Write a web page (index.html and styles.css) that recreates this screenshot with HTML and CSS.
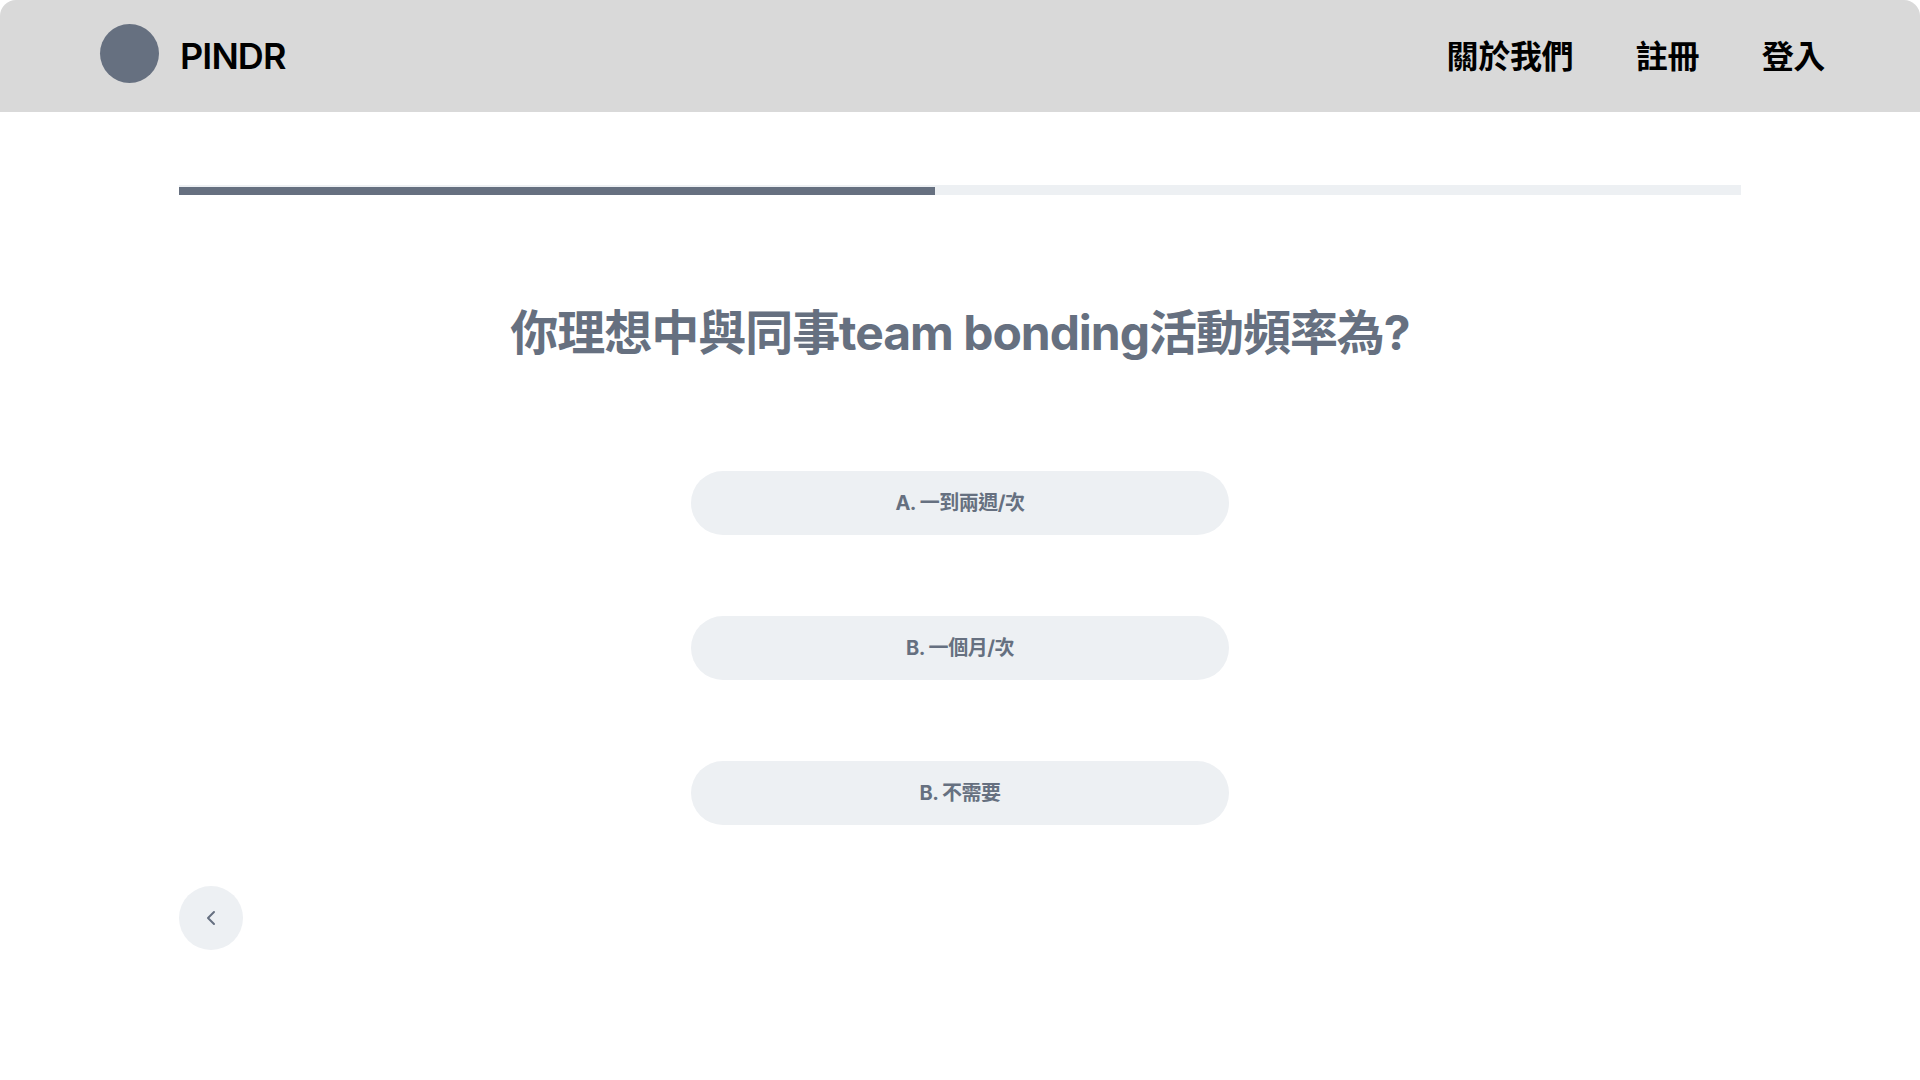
FILE: index.html
```html
<!DOCTYPE html>
<html lang="zh-Hant">
<head>
<meta charset="utf-8">
<title>PINDR</title>
<link rel="stylesheet" href="styles.css">
</head>
<body>
<header class="topbar">
  <div class="brand">
    <span class="brand-mark"></span>
    <span class="brand-name">PINDR</span>
  </div>
  <nav class="nav">
    <a class="nav-link">關於我們</a>
    <a class="nav-link">註冊</a>
    <a class="nav-link">登入</a>
  </nav>
</header>
<main class="quiz">
  <div class="progress"><div class="progress-fill"></div></div>
  <h1 class="question">你理想中與同事team bonding活動頻率為?</h1>
  <div class="options">
    <button class="option">A. 一到兩週/次</button>
    <button class="option">B. 一個月/次</button>
    <button class="option">B. 不需要</button>
  </div>
  <button class="back" aria-label="返回">
    <svg class="back-icon" viewBox="0 0 24 24" fill="none" stroke="currentColor" stroke-width="2" stroke-linecap="round" stroke-linejoin="round"><path d="M15 18l-6-6 6-6"/></svg>
  </button>
</main>
</body>
</html>
```
FILE: styles.css
```css
* { box-sizing: border-box; }
html, body { margin: 0; height: 100%; }
body {
  background: #fff;
  font-family: Inter, "Noto Sans CJK TC", sans-serif;
  letter-spacing: -0.02em;
  color: #667080;
}
.topbar {
  height: 112px;
  background: #d9d9d9;
  border-radius: 16px 16px 0 0;
  display: flex;
  align-items: center;
  justify-content: space-between;
  padding: 0 95px 0 100px;
}
.brand { display: flex; align-items: center; gap: 21px; }
.brand-mark { width: 59px; height: 59px; border-radius: 50%; background: #667080; margin-top: -5px; }
.brand-name { font-size: 36px; font-weight: 600; color: #000; line-height: 44px; letter-spacing: -0.025em; }
.nav { display: flex; gap: 62.5px; padding-top: 2px; }
.nav-link { font-size: 32px; font-weight: 600; color: #000; line-height: 40px; }
.quiz {
  padding: 73px 179px 0;
  display: flex;
  flex-direction: column;
}
.progress { height: 10px; background: #edf0f3; display: flex; align-items: flex-end; }
.progress-fill { height: 8px; width: 756px; background: #667080; }
.question {
  margin: 108px 0 0;
  font-size: 48px;
  line-height: 60px;
  font-weight: 700;
  letter-spacing: -0.0215em;
  text-align: center;
  color: #667080;
}
.options { margin-top: 108px; display: flex; flex-direction: column; align-items: center; gap: 81px; }
.option {
  width: 538px;
  height: 64px;
  border: 0;
  border-radius: 32px;
  background: #edf0f3;
  color: #667080;
  font: 700 20px/28px Inter, "Noto Sans CJK TC", sans-serif;
  letter-spacing: -0.024em;
}
.back {
  margin-top: 61px;
  width: 64px;
  height: 64px;
  padding: 0;
  border: 0;
  border-radius: 50%;
  background: #edf0f3;
  color: #667080;
  display: flex;
  align-items: center;
  justify-content: center;
}
.back-icon { width: 24px; height: 24px; }
```
